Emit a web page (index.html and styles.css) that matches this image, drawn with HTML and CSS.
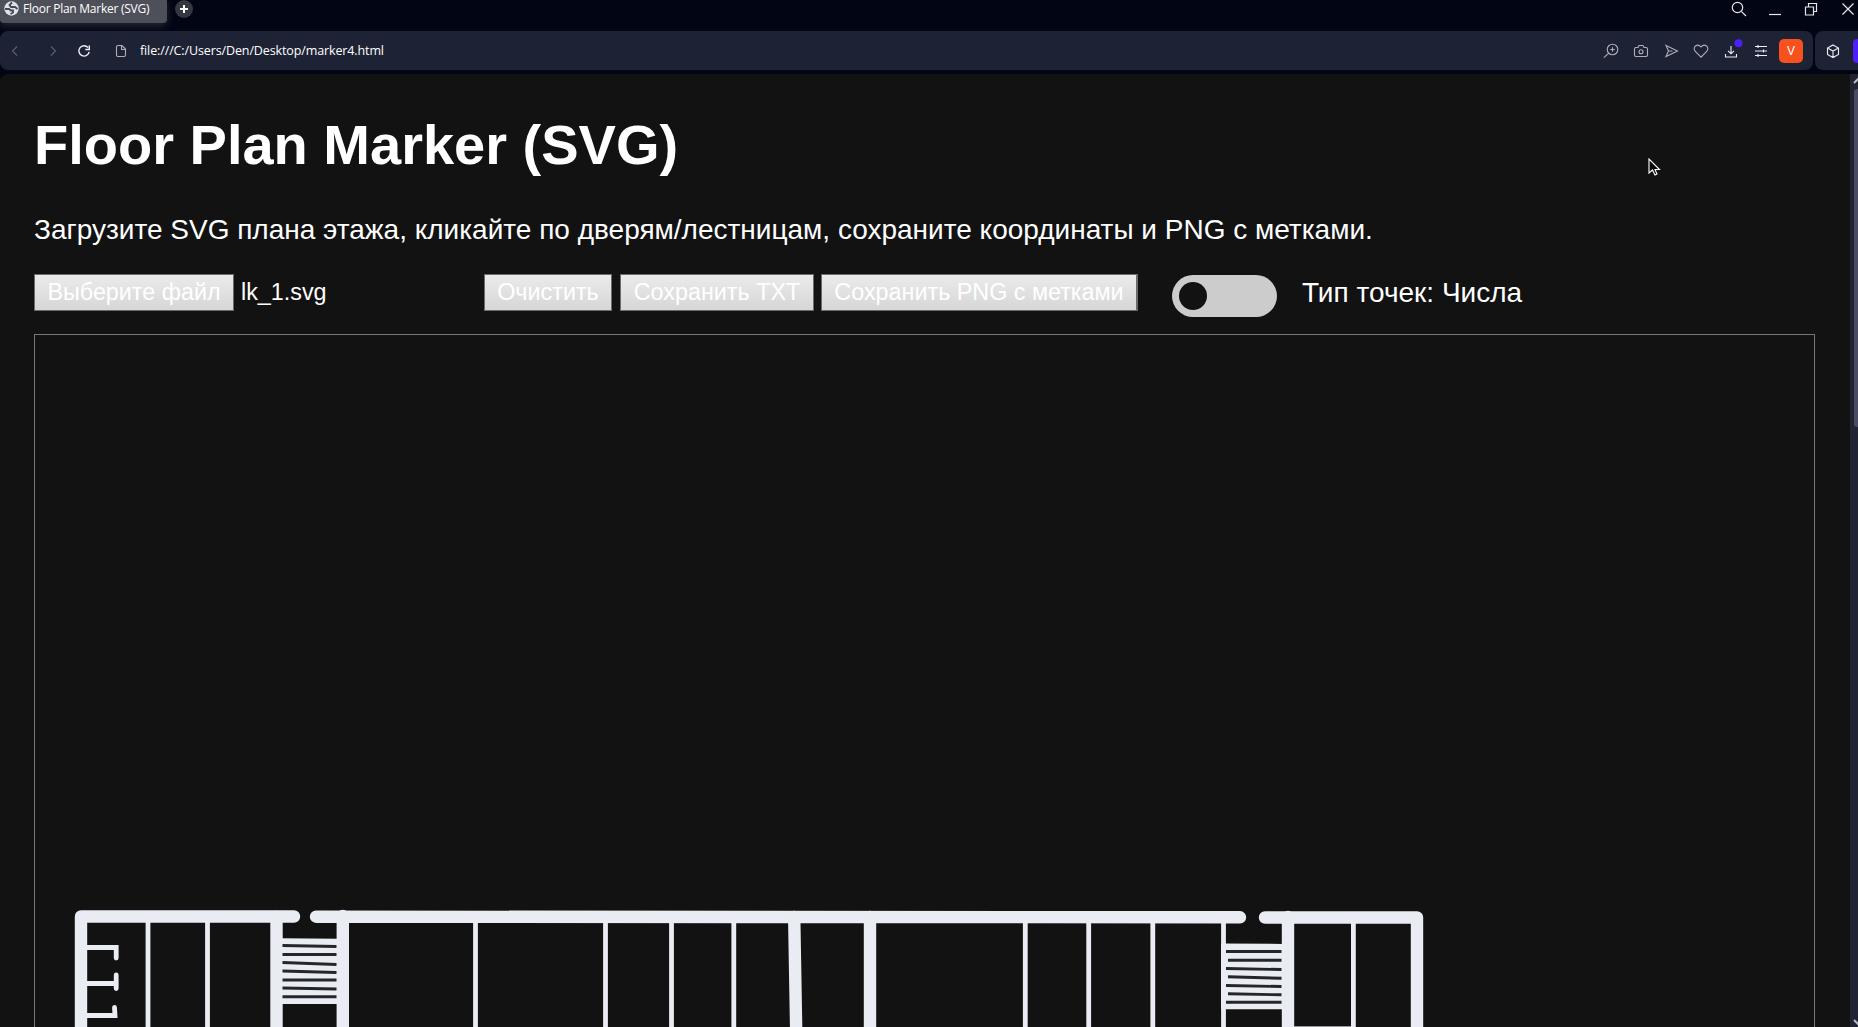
FILE: index.html
```html
<!DOCTYPE html>
<html lang="ru">
<head>
<meta charset="utf-8">
<title>Floor Plan Marker (SVG)</title>
<link rel="stylesheet" href="styles.css">
</head>
<body>
<div class="browser">
  <header class="tabs">
    <div class="tab">
      <svg class="globe" width="15" height="15" viewBox="0 0 15 15"><circle cx="7.500" cy="7.500" r="7.200" fill="#dfe1e8"/><path d="M8 1.500L5.500 4 7 6h4l2.500 2M1 8h4l2 1.500h2v2L6.500 13" fill="none" stroke="#454854" stroke-width="1.800"/></svg>
      <span class="tab-title">Floor Plan Marker (SVG)</span>
    </div>
    <div class="new-tab"><svg width="18" height="18" viewBox="0 0 18 18"><path d="M9 5v8M5 9h8" stroke="#fff" stroke-width="2"/></svg></div>
    <div class="window-controls">
      <svg viewBox="0 0 18 18"><circle cx="7.500" cy="7.500" r="5.200"/><path d="M11.300 11.300L16 16"/></svg>
      <svg viewBox="0 0 18 18"><path d="M3 14.500h12"/></svg>
      <svg viewBox="0 0 18 18"><path d="M3.500 7h8v8h-8zM6.500 7V3.500h8v8h-3"/></svg>
      <svg viewBox="0 0 18 18"><path d="M3.500 3.500l11 11M14.500 3.500l-11 11"/></svg>
    </div>
  </header>
  <nav class="bars">
    <div class="toolbar">
      <div class="nav-icons">
        <svg class="dim" viewBox="0 0 18 18"><path d="M11 4.500L6.500 9l4.500 4.500"/></svg>
        <svg class="dim" viewBox="0 0 18 18"><path d="M7 4.500L11.500 9 7 13.500"/></svg>
        <svg class="reload" viewBox="0 0 18 18"><path d="M13 5.500A5.200 5.200 0 1 0 14.200 9.800M14.300 3.500v4h-4"/></svg>
        <svg class="page-icon" viewBox="0 0 18 18"><path d="M4.500 5q0-1.500 1.500-1.500h4l3.500 3.500v6q0 1.500-1.500 1.500H6q-1.500 0-1.500-1.500zM9.500 3.500V7.500h4"/></svg>
      </div>
      <span class="url">file:///C:/Users/Den/Desktop/marker4.html</span>
      <div class="actions">
        <svg viewBox="0 0 18 18"><circle cx="10.500" cy="7.500" r="5.300"/><path d="M6.800 11.200l-5 4.500M8.200 7.500h4.600M10.500 5.200v4.600"/></svg>
        <svg viewBox="0 0 18 18"><path d="M2.500 7q0-1.500 1.500-1.500h2l1-2h4l1 2h2q1.500 0 1.500 1.500v6q0 1.500-1.500 1.500H4q-1.500 0-1.500-1.500z"/><circle cx="9" cy="9.800" r="2"/></svg>
        <svg viewBox="0 0 18 18"><path d="M4 3.500L15.500 9 4 14.500 6.500 9zM6.500 9h4"/></svg>
        <svg viewBox="0 0 18 18"><path d="M9 15.200L3.300 9.500C-.3 5 5.500.8 9 5c3.500-4.200 9.300 0 5.700 4.500z"/></svg>
        <svg class="bright" viewBox="0 0 18 18"><path d="M9 4v7.500M6 8.800l3 3 3-3M3.500 12v3h11v-3"/><circle class="badge" cx="16.500" cy="1.200" r="4"/></svg>
        <svg class="bright" viewBox="0 0 18 18"><path d="M3 4.500h12M3 9h12M3 13.500h12M6 3v3M11.500 7.500v3M6 12v3"/></svg>
        <div class="avatar"><span>V</span></div>
      </div>
    </div>
    <div class="sidebar-bar">
      <svg class="bright" viewBox="0 0 18 18"><path d="M9 3l5.500 3v6.500L9 15.500l-5.500-3V6zM3.500 6L9 9l5.500-3M9 9v6.500"/></svg>
      <div class="accent"></div>
    </div>
  </nav>
  <div class="viewport">
    <main class="page">
      <h1>Floor Plan Marker (SVG)</h1>
      <p class="intro">Загрузите SVG плана этажа, кликайте по дверям/лестницам, сохраните координаты и PNG с метками.</p>
      <div class="controls">
        <div class="file"><button class="btn choose">Выберите файл</button><span>lk_1.svg</span></div>
        <button class="btn clear">Очистить</button>
        <button class="btn txt">Сохранить TXT</button>
        <button class="btn png">Сохранить PNG с метками</button>
        <div class="switch"><div class="knob"></div></div>
        <span class="mode">Тип точек: Числа</span>
      </div>
      <div class="canvas">
        <svg class="plan" width="1779" height="692" viewBox="35 335 1779 692">
          <g class="thick">
            <path d="M81 1040V916.500H294"/>
            <path d="M316 916.700L1240 917.300"/>
            <path d="M1265 917.500H1417V1040"/>
            <path d="M276.500 917v115M342.800 916v115M794.200 917l2 115M870 917v115M1288 917v115"/>
          </g>
          <path class="thin" d="M148 917v115M207.500 917v115M475.500 917v115M605.500 917v115M671.500 917v115M733.800 917v115M1025.300 917v115M1088.700 917v115M1152.800 917v115M1223.500 917v115M1353.400 917v115"/>
          <path class="thin" d="M86 947.500h30.200v10.500M86 983.500h30M116.200 975v13.500M86 1015.500h29l-.5-8"/>
          <path class="fill" d="M281 938.200l57 .6v65.300h-57z"/>
          <path class="gap" d="M282.500 945.500l54 1M282.500 954.500h54M282.500 962.500l54 2M282.500 971l54 1.500M282.500 980h54M282.500 988l54 1M282.500 996.700h54"/>
          <path class="fill" d="M1221 943.500l62 .4v65.300h-62z"/>
          <path class="gap" d="M1226 951.500h55.500M1228 960.200h53.500M1226 968.500l55.500 1M1228 976.800l53.500 1.500M1226 985.500l55.500 1M1228 993.800l53.500 1M1226 1002.300h55.500"/>
          <path d="M1294 1026.500h57" stroke="#9a9a9c"/>
        </svg>
      </div>
    </main>
    <div class="scrollbar">
      <svg width="13" height="15" viewBox="0 0 13 15"><path d="M1 9l6-6 6 6" fill="none" stroke="#b9bac2" stroke-width="2"/></svg>
      <div class="thumb"></div>
      <div class="scroll-end"><svg width="13" height="8" viewBox="0 0 13 8"><path d="M1 1l6 6" stroke="#b9bac2" stroke-width="2"/></svg></div>
    </div>
  </div>
  <svg class="cursor" width="14" height="20" viewBox="0 0 14 20"><path d="M1 1v14l3.500-3 2.500 5 2-1-2-4.500h4.500z" fill="#0a0a0a" stroke="#fff" stroke-width="1.100"/></svg>
</div>
</body>
</html>
```
FILE: styles.css
```css
* { box-sizing: border-box; }
body { margin: 0; background: #020513; color: #fff; font-family: "Liberation Sans", Arial, sans-serif; overflow: hidden; }
.browser { position: relative; display: flex; flex-direction: column; width: 1858px; height: 1027px; overflow: hidden; }
.browser svg { flex: none; display: block; }

.tabs { display: flex; height: 31px; }
.tab { display: flex; width: 167px; height: 23px; padding: 1px 0 0 4px; gap: 4px; background: #4d4f59; border-radius: 0 0 4px 4px; box-shadow: 0 3px 8px #4d4f5977; }
.tab-title, .url { font-family: "Open Sans", "Noto Sans", sans-serif; white-space: nowrap; }
.tab-title { font-size: 12px; line-height: 16px; letter-spacing: -.25px; }
.new-tab { width: 18px; height: 18px; margin-left: 8px; border-radius: 50%; background: #353741; }
.window-controls { display: flex; margin-left: auto; margin-right: -8px; }
.window-controls svg { width: 18px; height: 18px; margin: 0 9.2px; fill: none; stroke: #e6e7ec; stroke-width: 1.2; }

.bars { display: flex; gap: 2px; height: 39px; margin-bottom: 4px; }
.bars svg { width: 18px; height: 18px; fill: none; stroke: #aeb0b9; stroke-width: 1.1; overflow: visible; }
.bars svg.bright { stroke: #eceef4; }
.bars svg.dim { stroke: #5c5f6e; }
.bars svg.reload { stroke: #eceef4; stroke-width: 1.4; }
.toolbar { display: flex; align-items: center; width: 1813px; padding: 0 7px 0 6px; border-radius: 8px; background: #1e2235; }
.nav-icons { display: flex; width: 134px; }
.nav-icons svg { margin-right: 19px; }
.nav-icons .reload { margin-left: -6px; }
.nav-icons .page-icon { margin: 0; }
.nav-icons .dim { margin-right: 19.5px; }
.url { font-size: 12.5px; line-height: 20px; letter-spacing: -.12px; }
.actions { display: flex; align-items: center; margin-left: auto; }
.actions svg { margin: 0 6px; }
.bars .badge { fill: #4c1ffb; stroke: none; }
.avatar { display: flex; align-items: center; justify-content: center; width: 24px; height: 24px; margin: 0 3px; border-radius: 5px; background: #f7511d; font-size: 12px; }
.sidebar-bar { display: flex; align-items: center; width: 43px; padding-left: 9px; border-radius: 8px 0 0 8px; background: #1e2235; }
.accent { flex: none; width: 5px; height: 24px; margin-left: 11px; border-radius: 4px 0 0 4px; background: #4c1ffb; }

.viewport { display: flex; flex: 1; min-height: 0; border-top-left-radius: 8px; overflow: hidden; background: #121212; }
.page { display: flex; flex-direction: column; width: 1850px; padding: 39px 35px 0 34px; }
h1 { margin: 0 0 37px; font-size: 56px; line-height: 64px; white-space: nowrap; }
.intro { margin: 0 0 28px; font-size: 28px; line-height: 32px; white-space: nowrap; }
.controls { display: flex; flex: none; align-items: flex-start; height: 60px; font-size: 23.33px; }
.file { display: flex; gap: 7px; width: 450px; line-height: 37px; }
.btn { flex: none; height: 37px; padding: 0; border: 1px solid #6b6b6b; border-radius: 0; background: linear-gradient(#ebebeb, #d6d6d6); color: #fff; font: 23.33px/35px "Liberation Sans", Arial, sans-serif; white-space: nowrap; }
.choose { width: 200px; }
.clear { width: 128px; }
.txt { width: 194px; margin-left: 8px; }
.png { width: 317px; margin-left: 7px; border-right-width: 2px; }
.switch { width: 105px; height: 42px; margin: 1px 0 0 34px; padding: 7px; border-radius: 21px; background: #ccc; }
.knob { width: 28px; height: 28px; border-radius: 50%; background: #121212; }
.mode { margin-left: 25px; font-size: 28px; line-height: 38px; white-space: nowrap; }
.canvas { height: 760px; flex: none; border: 1px solid #777; }
.plan { fill: none; }
.thick { stroke: #e9ecf2; stroke-width: 12.4; stroke-linecap: round; stroke-linejoin: round; }
.thin { stroke: #e9ecf2; stroke-width: 4.8; stroke-linecap: round; }
.fill { fill: #e9ecf2; }
.gap { stroke: #252629; stroke-width: 2.9; }

.scrollbar { display: flex; flex-direction: column; width: 8px; background: #212433; overflow: hidden; }
.scrollbar > svg { margin-left: 3px; }
.thumb { width: 12px; height: 338px; margin-left: 4px; border-radius: 3px; background: #484b61; }
.scroll-end { margin: auto 0 0 3px; }
.cursor { position: absolute; left: 1648px; top: 158px; }
```
